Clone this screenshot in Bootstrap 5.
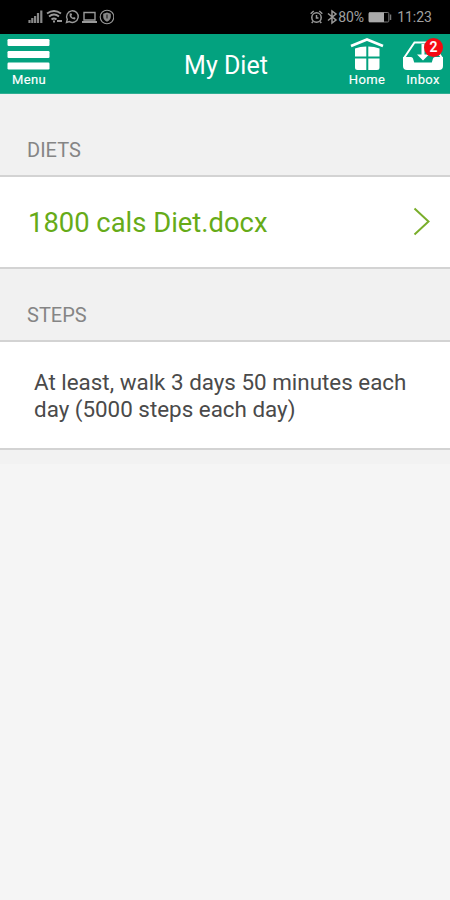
<!DOCTYPE html>
<html lang="en">
<head>
<meta charset="utf-8">
<meta name="viewport" content="width=device-width, initial-scale=1">
<title>My Diet</title>
<link href="https://cdn.jsdelivr.net/npm/bootstrap@5.3.0/dist/css/bootstrap.min.css" rel="stylesheet">
<style>
body { font-family: Roboto, "Liberation Sans", sans-serif; background: #f5f5f5; min-height: 900px; overflow: hidden; }
svg { display: block; flex: none; }
.status-bar { height: 34px; background: #000; color: #a0a0a0; font-size: 14px; line-height: 34px; padding: 0 18px 0 28px; }
.app-bar { height: 60px; background: #03a27f; color: #fff; border-bottom: 1px solid #2fae92; display: grid; grid-template-columns: 103px 1fr 103px; }
.app-bar h1 { font-size: 25px; line-height: 30px; font-weight: 400; padding: 17px 0 0 2px; }
.app-bar a { font-size: 13px; line-height: 15px; font-weight: 400; letter-spacing: .4px; -webkit-text-stroke: .15px #fff; }
.menu-link { padding: 5px 0 0 7px; width: 50px; }
.menu-link .nav-caption { margin: 2px 0 0 1px; }
.home-link { width: 40px; padding-top: 4px; }
.inbox-link { width: 42px; padding-top: 4px; }
.nav-caption { margin-top: 1px; }
.icon-nav { padding-right: 6px; }
.inbox-count { left: 22px; top: 4px; width: 19px; height: 19px; background: #f50a12; font-size: 14px; line-height: 19px; font-weight: 500; letter-spacing: 0; }
.section-label { background: #f1f1f1; color: #858585; font-size: 20px; line-height: 24px; font-weight: 400; padding: 0 27px 13px; }
.diets-label { height: 81px; }
.steps-label { height: 71px; }
.panel { background: #fff; border-top: 2px solid #d3d3d3; border-bottom: 2px solid #d3d3d3; }
.diet-row { height: 94px; color: #66ab18; font-size: 27.4px; padding: 4px 20px 0 28px; }
.diet-row svg { margin-top: -5px; }
.steps-row { height: 110px; color: #4a4a4a; font-size: 22.4px; line-height: 26.5px; padding: 27px 20px 0 34px; }
.panel-foot { height: 14px; background: #f2f2f2; }
</style>
<script src="https://cdn.jsdelivr.net/npm/bootstrap@5.3.0/dist/js/bootstrap.bundle.min.js"></script>
</head>
<body>
<div class="status-bar d-flex justify-content-between">
  <div class="d-flex align-items-center">
    <svg width="86" height="18" viewBox="28 8 86 18" fill="none" stroke="#999" stroke-width="1.4">
      <path d="M29.5 20v3M32.3 18v5M35.1 16v7M38 13v10M41.3 10.500v12.500" stroke-width="2.200" stroke="#888"/>
      <path d="M47 13.500q7-5 14 0M49 16.500q5-4 10 0M51.500 19.500q2.500-2 5 0" stroke-width="1.900"/><path d="M54 20.500v2M57 21h5" stroke-width="2"/>
      <path d="M66.500 22.500l.8-3.200a5.800 5.800 0 1 1 2.200 2.300z"/><path d="M69.700 13.600q-1 5 5 6l1-1.600-1.700-1-1 .8q-1.300-.7-1.700-2l.8-1-.7-1.500z" fill="#999" stroke="none"/>
      <path d="M84 12.500h11v7.500H84z"/><path d="M82 22h15" stroke-width="2"/>
      <circle cx="107" cy="17" r="6.800" stroke-width="1.100"/><path d="M107 12.500l3.800 1.200v3q0 3-3.800 5-3.800-2-3.800-5v-3z" fill="#888" stroke="none"/><path d="M107 14.500v4" stroke="#333"/>
    </svg>
  </div>
  <div class="d-flex align-items-center">
    <svg width="28" height="18" viewBox="310 8 28 18" fill="none" stroke="#999" stroke-width="1.500">
      <circle cx="316.500" cy="17.500" r="4.700"/><path d="M310.700 13.700l3-2.700M322.300 13.700l-3-2.700M316.500 15v3h2M313 21.500l-1.300 1.500M320 21.500l1.300 1.500"/>
      <path d="M328 13.500l8 6.500-4 3V11l4 3-8 6.500"/>
    </svg>
    <span id="battery-level">80%</span>
    <svg class="ms-1" width="25" height="18" viewBox="0 0 25 18"><rect x=".8" y="4.500" width="20" height="9.500" rx="1" fill="none" stroke="#777"/><path d="M1 4.500h15v9.500H1z" fill="#aaa"/><path d="M22.500 6.500v5.500" stroke="#777" stroke-width="1.500"/></svg>
    <span id="clock" class="ms-1">11:23</span>
  </div>
</div>
<header class="app-bar">
  <a href="#" class="menu-link text-white text-decoration-none text-center">
    <svg width="43" height="31" viewBox="0 0 43 31" fill="#fff"><rect x=".5" y="0" width="42" height="7" rx="1.200"/><rect x=".5" y="12" width="42" height="7" rx="1.200"/><rect x=".5" y="23.500" width="42" height="7" rx="1.200"/></svg>
    <span class="nav-caption d-block">Menu</span>
  </a>
  <h1 class="text-center mb-0">My Diet</h1>
  <nav class="icon-nav d-flex justify-content-between">
    <a href="#" class="home-link text-white text-decoration-none text-center">
      <svg class="mx-auto" width="34" height="33" viewBox="0 0 34 33"><path d="M1 8L17 1.500 33 8" fill="none" stroke="#fff" stroke-width="2.700"/><path d="M5 10.500Q10 8.500 16.300 8.500v10H5zM18.300 8.500q6 0 11.200 2v8H18.300zM5 20.500h11.300V32H7.500Q5 32 5 29.500zM18.300 20.500h11.200v9q0 2.500-2.500 2.500h-8.700z" fill="#fff"/></svg>
      <span class="nav-caption d-block">Home</span>
    </a>
    <a href="#" class="inbox-link position-relative text-white text-decoration-none text-center">
      <svg width="42" height="33" viewBox="0 0 42 33"><path d="M2 20L12.500 4.500h17L40 20" fill="none" stroke="#fff" stroke-width="2"/><path d="M1 19h8q1.500 0 2 1.500l1.200 4h17.600l1.200-4q.5-1.500 2-1.500h8v9q0 4-4 4H5q-4 0-4-4z" fill="#fff"/><path d="M19.500 6h3v10.500H27l-6 6-6-6h4.500z" fill="#fff"/></svg>
      <span class="inbox-count position-absolute rounded-circle">2</span>
      <span class="nav-caption d-block">Inbox</span>
    </a>
  </nav>
</header>
<main>
  <h2 class="section-label diets-label d-flex align-items-end m-0">DIETS</h2>
  <a href="#" class="panel diet-row d-flex align-items-center justify-content-between text-decoration-none">
    <span id="diet-name">1800 cals Diet.docx</span>
    <svg width="17" height="30" viewBox="0 0 17 30" fill="none" stroke="#7aae2b" stroke-width="2"><path d="M1.500 1.500L15.500 14.500 1.500 27.500"/></svg>
  </a>
  <h2 class="section-label steps-label d-flex align-items-end m-0">STEPS</h2>
  <p class="panel steps-row m-0">At least, walk 3 days 50 minutes each<br>day (5000 steps each day)</p>
  <div class="panel-foot"></div>
</main>
</body>
</html>
